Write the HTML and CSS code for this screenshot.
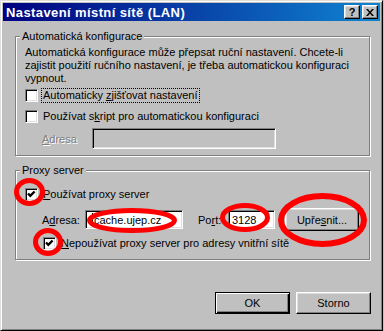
FILE: index.html
```
<!DOCTYPE html>
<html lang="cs">
<head>
<meta charset="utf-8">
<title>Nastavení místní sítě (LAN)</title>
<link rel="stylesheet" href="styles.css">
</head>
<body>
<div class="window">
  <div class="titlebar">
    <span class="title">Nastavení místní sítě (LAN)</span>
    <div class="tbtns">
      <span class="tbtn help">?</span>
      <span class="tbtn close"><svg width="8" height="7" viewBox="0 0 8 7"><path d="M0 0h2l2 2.5L6 0h2L5 3.5 8 7H6L4 4.5 2 7H0l3-3.5z" fill="#000"/></svg></span>
    </div>
  </div>
  <div class="content">
    <fieldset class="group g-auto">
      <legend>Automatická konfigurace</legend>
      <p class="desc">Automatická konfigurace může přepsat ruční nastavení. Chcete-li<br>zajistit použití ručního nastavení, je třeba automatickou konfiguraci<br>vypnout.</p>
      <div class="check r1 focus"><span class="box"></span><span class="lbl">Automaticky <u>z</u>jišťovat nastavení</span></div>
      <div class="check r2"><span class="box"></span><span class="lbl">Používat s<u>k</u>ript pro automatickou konfiguraci</span></div>
      <div class="addr addr1"><span class="lab disabled lab1"><u>A</u>dresa</span><span class="field off f1"></span></div>
    </fieldset>
    <fieldset class="group g-proxy">
      <legend>Proxy server</legend>
      <div class="check r3"><span class="box"><svg class="tick" width="13" height="13" viewBox="0 0 13 13"><path d="M3 5.5l2.3 2.3L9.6 3.5" fill="none" stroke="#000" stroke-width="2.4"/></svg></span><span class="lbl"><u>P</u>oužívat proxy server</span></div>
      <div class="addr addr2">
        <span class="lab lab2">A<u>d</u>resa:</span><span class="field f2"><span class="caret"></span>cache.ujep.cz</span>
        <span class="lab lab3">Po<u>r</u>t:</span><span class="field f3">3128</span>
        <span class="btn adv">Upře<u>s</u>nit...</span>
      </div>
      <div class="check r4"><span class="box"><svg class="tick" width="13" height="13" viewBox="0 0 13 13"><path d="M3 5.5l2.3 2.3L9.6 3.5" fill="none" stroke="#000" stroke-width="2.4"/></svg></span><span class="lbl"><u>N</u>epoužívat proxy server pro adresy vnitřní sítě</span></div>
    </fieldset>
  </div>
  <div class="actions">
    <span class="btn default">OK</span>
    <span class="btn">Storno</span>
  </div>
  <svg class="marks" width="384" height="331" viewBox="0 0 384 331">
    <g fill="none" stroke="#ff0000" stroke-width="5">
      <ellipse cx="29.5" cy="192" rx="13" ry="11.5"/>
      <ellipse cx="48" cy="242" rx="12.5" ry="11.5"/>
      <ellipse cx="132" cy="220.5" rx="42.5" ry="10"/>
      <ellipse cx="245" cy="217.5" rx="22.5" ry="12"/>
      <ellipse cx="322.5" cy="220" rx="41.5" ry="24" stroke-width="6"/>
    </g>
  </svg>
</div>
</body>
</html>
```
FILE: styles.css
```
* { box-sizing: border-box; }
html, body { margin: 0; padding: 0; }
body {
  background: #c0c0c0;
  font: 11px "Liberation Sans", Arial, sans-serif;
  color: #000;
  width: 384px;
  height: 331px;
  overflow: hidden;
}
u { text-decoration: underline; text-underline-offset: 1px; }

.window {
  position: relative;
  width: 383px;
  height: 331px;
  border: 1px solid;
  border-color: #dfdfdf #000 #000 #dfdfdf;
  box-shadow: inset 1px 1px #fff, inset -1px -1px #808080;
  padding: 2px;
  display: flex;
  flex-direction: column;
  background: #c0c0c0;
}

.titlebar {
  height: 18px;
  background: linear-gradient(90deg, #000080, #1084d0);
  display: flex;
  align-items: center;
  padding: 0 2px 0 3px;
}
.title { color: #fff; font-weight: bold; font-size: 13px; letter-spacing: 0.4px; flex: 1; white-space: nowrap; }
.tbtns { display: flex; gap: 2px; }
.tbtn {
  width: 16px; height: 14px;
  background: #c0c0c0;
  border: 1px solid;
  border-color: #fff #000 #000 #fff;
  box-shadow: inset -1px -1px #808080, inset 1px 1px #dfdfdf;
  display: flex; align-items: center; justify-content: center;
  font-weight: bold; font-size: 11px; line-height: 12px; color: #000;
}

.content { padding: 9px 10px 0 12px; }

.group {
  margin: 0;
  min-width: 0;
  border: 1px solid #808080;
  box-shadow: 1px 1px 0 #fff, inset 1px 1px 0 #fff;
  padding: 3px 9px 6px 9px;
}
.group legend {
  padding: 0 2px;
  margin-left: -5px;
  line-height: 13px;
  background: #c0c0c0;
}
.g-proxy { margin-top: 8px; padding-bottom: 7px; }

.desc { margin: 0; line-height: 13px; white-space: nowrap; }

.check { display: flex; align-items: center; height: 17px; white-space: nowrap; }
.box {
  flex: none;
  width: 13px; height: 13px;
  background: #fff;
  border: 1px solid;
  border-color: #808080 #fff #fff #808080;
  box-shadow: inset 1px 1px #000, inset -1px -1px #dfdfdf;
  margin-right: 3px;
  position: relative;
}
.tick { position: absolute; left: -1px; top: -1px; }
.lbl { border: 1px dotted transparent; padding: 0 1px; line-height: 13px; }
.focus .lbl { border-color: #000; }
.r1 { margin-top: 2px; }
.r2 { margin-top: 4px; }
.r3 { margin-top: 6px; }
.r4 { margin-top: 4px; padding-left: 18px; }

.addr { display: flex; align-items: center; white-space: nowrap; }
.addr1 { margin-top: 3px; }
.addr2 { margin-top: 5px; height: 23px; }
.lab { flex: none; }
.lab1 { margin-left: 17px; width: 50px; }
.lab2 { margin-left: 17px; width: 43px; }
.lab3 { margin-left: 15px; width: 30px; }
.disabled { color: #808080; text-shadow: 1px 1px 0 #fff; }

.field {
  flex: none;
  display: flex; align-items: center;
  background: #fff;
  border: 1px solid;
  border-color: #808080 #fff #fff #808080;
  box-shadow: inset 1px 1px #000, inset -1px -1px #dfdfdf;
  padding-left: 4px;
}
.field.off { background: #c0c0c0; }
.f1 { width: 184px; height: 21px; }
.f2 { width: 98px; height: 19px; padding-left: 6px; }
.caret { width: 1px; height: 13px; background: #000; margin-right: 1px; }
.f3 { width: 47px; height: 19px; padding-left: 3px; }

.btn {
  flex: none;
  display: flex; align-items: center; justify-content: center;
  width: 75px; height: 22px;
  background: #c0c0c0;
  border: 1px solid;
  border-color: #fff #000 #000 #fff;
  box-shadow: inset -1px -1px #808080, inset 1px 1px #dfdfdf;
  white-space: nowrap;
}
.adv { width: 74px; height: 23px; margin-left: 10px; }
.btn.default {
  border-color: #000;
  box-shadow: inset 1px 1px #fff, inset -1px -1px #000, inset -2px -2px #808080;
}

.actions {
  margin-top: auto;
  display: flex;
  justify-content: flex-end;
  gap: 6px;
  padding: 0 9px 14px 0;
}

.marks { position: absolute; left: -1px; top: -1px; pointer-events: none; }
```
